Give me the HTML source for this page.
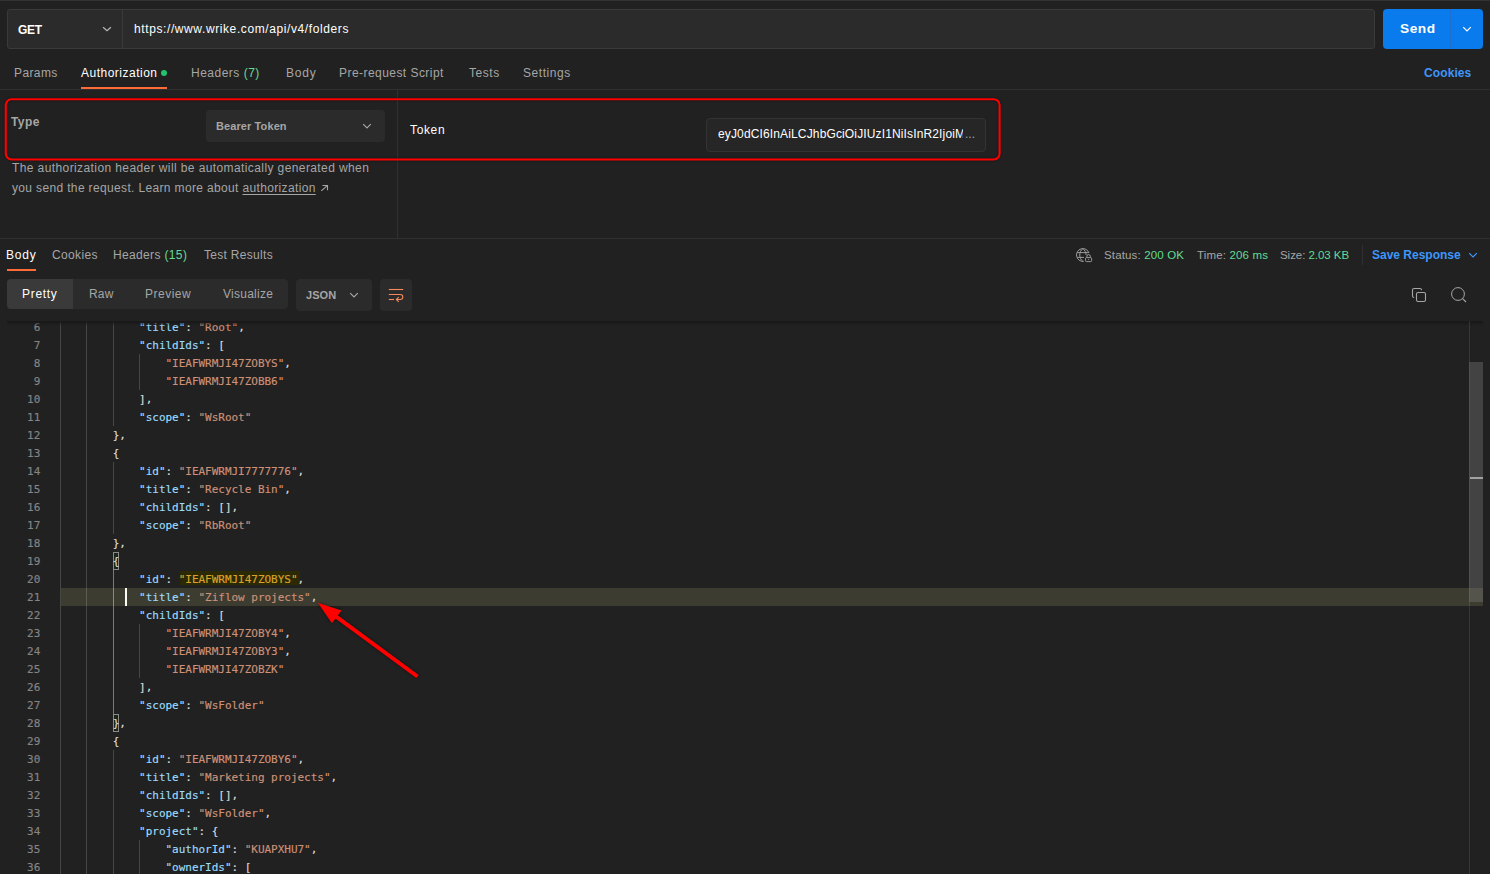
<!DOCTYPE html>
<html lang="en">
<head>
<meta charset="utf-8">
<title>Postman - Wrike folders</title>
<style>
*{box-sizing:border-box;margin:0;padding:0}
html,body{width:1490px;height:874px;overflow:hidden;background:#212121}
body{position:relative;font-family:"Liberation Sans",Arial,sans-serif;font-size:12px;color:#fff;-webkit-font-smoothing:antialiased}
.abs{position:absolute}
.t{position:absolute;white-space:nowrap;line-height:16px}
.gray{color:#a6a6a6}
.grn{color:#62dc95}
.topline{left:0;top:0;width:1490px;height:1px;background:#333}
/* url bar */
.urlbar{left:7px;top:9px;width:1368px;height:40px;background:#2b2b2b;border:1px solid #3a3a3a;border-radius:3px}
.urlsep{left:122px;top:10px;width:1px;height:38px;background:#3a3a3a}
.send{left:1383px;top:9px;width:100px;height:40px;background:#097bed;border-radius:4px}
.sendsep{left:1450px;top:9px;width:1px;height:40px;background:#1f6fd0}
.hline{left:0;width:1490px;height:1px;background:#303030}
.orange{background:#ff6c37}
/* auth */
.redbox{left:5px;top:99px;width:996px;height:61px;border:2px solid #f20a0a;border-radius:7px}
.vsep{left:397px;top:90px;width:1px;height:148px;background:#303030}
.dd{left:206px;top:110px;width:179px;height:32px;background:#2b2b2b;border-radius:4px}
.tok{left:706px;top:118px;width:280px;height:34px;background:#262626;border:1px solid #333;border-radius:4px}
/* response toolbar */
.seg{left:7px;top:279px;width:281px;height:30px;background:#2b2b2b;border-radius:4px}
.segact{left:7px;top:279px;width:66px;height:30px;background:#3a3a3a;border-radius:4px 0 0 4px}
.jsondd{left:296px;top:279px;width:76px;height:32px;background:#2b2b2b;border-radius:4px}
.wrapbtn{left:380px;top:279px;width:32px;height:32px;background:#2b2b2b;border-radius:4px}
/* code */
.code{left:7px;top:321px;width:1476px;height:553px;overflow:hidden;background:#212121}
.shadow{left:7px;top:321px;width:1476px;height:5px;background:linear-gradient(#171717,rgba(33,33,33,0))}
.ln{position:absolute;left:0;width:1469px;height:18px;font-family:"DejaVu Sans Mono","Liberation Mono",monospace;font-size:11px;letter-spacing:-0.022px;line-height:18px;white-space:pre;-webkit-text-stroke:0.15px}
.ln .no{position:absolute;left:0;top:1px;width:40.3px;text-align:right;color:#858585}
.ln .tx{position:absolute;top:1px}
.band{left:61px;top:588px;width:1422px;height:18px;background:#3d3c30}
.k{color:#9cdcfe}.s{color:#ce9178}.p{color:#dcdcdc}
.b{color:#dcdcdc}
.h{color:#dba32c}
.hl{left:180px;top:571px;width:120px;height:14px;background:#2c2a04}
.guide{position:absolute;width:1px;background:rgba(255,255,235,0.17)}
.guide.act{background:rgba(255,255,245,0.40)}
.bbox{left:113px;width:6px;height:18px;border:1px solid #8a8a8a;background:#1b2618}
.cursor{left:125px;top:588px;width:2px;height:18px;background:#fbfbf6}
.sbar{left:1469px;top:362px;width:14px;height:240px;background:rgba(121,121,121,0.4)}
.sline{left:1469px;top:321px;width:1px;height:553px;background:rgba(255,255,255,0.1)}
.smark{left:1470px;top:477px;width:13px;height:2px;background:#a3a3a3}
</style>
</head>
<body>
<div class="abs topline"></div>

<!-- URL bar -->
<div class="abs urlbar"></div>
<div class="abs urlsep"></div>
<svg class="abs" style="left:101px;top:23px" width="12" height="12" viewBox="0 0 12 12"><path d="M2.1 4.2 L6 7.8 L9.9 4.2" fill="none" stroke="#b8b8b8" stroke-width="1.2"/></svg>
<div class="abs send"></div>
<div class="abs sendsep"></div>
<svg class="abs" style="left:1461px;top:23px" width="12" height="12" viewBox="0 0 12 12"><path d="M2.2 4.2 L6 8 L9.8 4.2" fill="none" stroke="#fff" stroke-width="1.2"/></svg>

<!-- request tabs -->
<div class="abs" style="left:161px;top:70px;width:6px;height:6px;border-radius:3px;background:#1fc46c"></div>
<div class="abs orange" style="left:81px;top:87px;width:86px;height:2px"></div>
<div class="abs hline" style="top:89px"></div>

<!-- auth panel -->
<div class="abs vsep"></div>
<div class="abs dd"></div>
<svg class="abs" style="left:361px;top:120px" width="12" height="12" viewBox="0 0 12 12"><path d="M2.2 4.2 L6 8 L9.8 4.2" fill="none" stroke="#a6a6a6" stroke-width="1.2"/></svg>
<div class="abs tok"></div>
<div class="t" style="left:718px;top:126px;width:245px;overflow:hidden;letter-spacing:0.14px">eyJ0dCI6InAiLCJhbGciOiJIUzI1NiIsInR2IjoiMTIz</div>
<div class="t gray" style="left:965px;top:126px">...</div>
<svg class="abs" style="left:0;top:94px;filter:drop-shadow(0 0 1.2px rgba(0,16,16,.7))" width="1010" height="72" viewBox="0 94 1010 72"><rect x="5.75" y="99.3" width="993.85" height="60.2" rx="5.8" ry="5.8" fill="none" stroke="#ff0000" stroke-width="2.1"/></svg>
<svg class="abs" style="left:318px;top:182px" width="12" height="12" viewBox="318 182 12 12"><path d="M321.3 190.8 L327.3 185.7 M322.5 185.5 H327.5 V190.3" fill="none" stroke="#a6a6a6" stroke-width="1.1"/></svg>
<div class="abs hline" style="top:238px"></div>

<!-- response tabs -->
<div class="abs orange" style="left:7px;top:269px;width:29px;height:2px"></div>

<svg class="abs" style="left:1074px;top:246px" width="20" height="18" viewBox="1074 246 20 18"><g fill="none" stroke="#a0a0a0" stroke-width="0.95"><path d="M1088.91 252.81 A6.4 6.4 0 1 0 1083.79 261.34"/><path d="M1077.2 252.6 H1088.9"/><path d="M1077.2 257.4 H1084"/><path d="M1082.9 248.6 C1078.7 251.5 1078.7 258.5 1082.9 261.4"/><path d="M1082.9 248.6 C1085 250.2 1086 252.4 1086.1 255"/><rect x="1085.6" y="257.6" width="6" height="4" rx="0.9"/><path d="M1086.9 257.6 V256.3 A1.7 1.7 0 0 1 1090.3 256.3 V257.6"/><circle cx="1088.6" cy="259.6" r="0.5" fill="#a6a6a6" stroke="none"/></g></svg>
<div class="abs" style="left:1362px;top:245px;width:1px;height:20px;background:#303030"></div>
<svg class="abs" style="left:1467px;top:249px" width="12" height="12" viewBox="0 0 12 12"><path d="M2.2 4.2 L6 8 L9.8 4.2" fill="none" stroke="#3e96fa" stroke-width="1.2"/></svg>

<!-- response toolbar -->
<div class="abs seg"></div>
<div class="abs segact"></div>
<div class="abs jsondd"></div>
<svg class="abs" style="left:348px;top:289px" width="12" height="12" viewBox="0 0 12 12"><path d="M2.2 4.2 L6 8 L9.8 4.2" fill="none" stroke="#a6a6a6" stroke-width="1.2"/></svg>
<div class="abs wrapbtn"></div>
<svg class="abs" style="left:386px;top:286px" width="20" height="18" viewBox="386 286 20 18"><g fill="none" stroke="#f38b5e" stroke-width="1.1"><path d="M388.8 289.5 H403.2"/><path d="M388.8 294.5 H400.3 A2.5 2.5 0 0 1 400.3 299.5 H396.6"/><path d="M388.8 299.5 H394"/><path d="M398.8 297.1 L396.3 299.5 L398.8 301.9"/></g></svg>
<svg class="abs" style="left:1408px;top:284px" width="22" height="22" viewBox="1408 284 22 22"><g fill="none" stroke="#a6a6a6" stroke-width="1.1"><rect x="1416.5" y="292.5" width="9" height="9" rx="1.6"/><path d="M1421.5 290.2 V290 A1.5 1.5 0 0 0 1420 288.5 H1414 A1.5 1.5 0 0 0 1412.5 290 V296 A1.5 1.5 0 0 0 1414 297.5 H1414.2"/></g></svg>
<svg class="abs" style="left:1448px;top:284px" width="22" height="22" viewBox="1448 284 22 22"><g fill="none" stroke="#a6a6a6" stroke-width="1.1"><circle cx="1458" cy="294" r="6.4" stroke-width="1"/><path d="M1462.6 298.6 L1466 302"/></g></svg>

<!-- code -->
<div class="abs code"></div>
<div class="abs band"></div>
<div class="guide" style="left:60px;top:321px;height:553px"></div>
<div class="guide" style="left:86px;top:321px;height:553px"></div>
<div class="guide" style="left:113px;top:321px;height:105px"></div>
<div class="guide" style="left:113px;top:462px;height:72px"></div>
<div class="guide act" style="left:113px;top:570px;height:144px"></div>
<div class="guide" style="left:113px;top:750px;height:124px"></div>
<div class="guide" style="left:139px;top:354px;height:36px"></div>
<div class="guide" style="left:139px;top:624px;height:54px"></div>
<div class="guide" style="left:139px;top:840px;height:34px"></div>
<div class="abs bbox" style="top:552px"></div>
<div class="abs bbox" style="top:714px"></div>
<div class="abs hl"></div>
<div class="ln" style="top:318px"><span class="no">6</span><span class="tx" style="left:139.1px"><span class="k">"title"</span><span class="p">: </span><span class="s">"Root"</span><span class="p">,</span></span></div>
<div class="ln" style="top:336px"><span class="no">7</span><span class="tx" style="left:139.1px"><span class="k">"childIds"</span><span class="p">: [</span></span></div>
<div class="ln" style="top:354px"><span class="no">8</span><span class="tx" style="left:165.5px"><span class="s">"IEAFWRMJI47ZOBYS"</span><span class="p">,</span></span></div>
<div class="ln" style="top:372px"><span class="no">9</span><span class="tx" style="left:165.5px"><span class="s">"IEAFWRMJI47ZOBB6"</span></span></div>
<div class="ln" style="top:390px"><span class="no">10</span><span class="tx" style="left:139.1px"><span class="p">],</span></span></div>
<div class="ln" style="top:408px"><span class="no">11</span><span class="tx" style="left:139.1px"><span class="k">"scope"</span><span class="p">: </span><span class="s">"WsRoot"</span></span></div>
<div class="ln" style="top:426px"><span class="no">12</span><span class="tx" style="left:112.7px"><span class="p">},</span></span></div>
<div class="ln" style="top:444px"><span class="no">13</span><span class="tx" style="left:112.7px"><span class="p">{</span></span></div>
<div class="ln" style="top:462px"><span class="no">14</span><span class="tx" style="left:139.1px"><span class="k">"id"</span><span class="p">: </span><span class="s">"IEAFWRMJI7777776"</span><span class="p">,</span></span></div>
<div class="ln" style="top:480px"><span class="no">15</span><span class="tx" style="left:139.1px"><span class="k">"title"</span><span class="p">: </span><span class="s">"Recycle Bin"</span><span class="p">,</span></span></div>
<div class="ln" style="top:498px"><span class="no">16</span><span class="tx" style="left:139.1px"><span class="k">"childIds"</span><span class="p">: [],</span></span></div>
<div class="ln" style="top:516px"><span class="no">17</span><span class="tx" style="left:139.1px"><span class="k">"scope"</span><span class="p">: </span><span class="s">"RbRoot"</span></span></div>
<div class="ln" style="top:534px"><span class="no">18</span><span class="tx" style="left:112.7px"><span class="p">},</span></span></div>
<div class="ln" style="top:552px"><span class="no">19</span><span class="tx" style="left:112.7px"><span class="b">{</span></span></div>
<div class="ln" style="top:570px"><span class="no">20</span><span class="tx" style="left:139.1px"><span class="k">"id"</span><span class="p">: </span><span class="h">"IEAFWRMJI47ZOBYS"</span><span class="p">,</span></span></div>
<div class="ln cur" style="top:588px"><span class="no">21</span><span class="tx" style="left:139.1px"><span class="k">"title"</span><span class="p">: </span><span class="s">"Ziflow projects"</span><span class="p">,</span></span></div>
<div class="ln" style="top:606px"><span class="no">22</span><span class="tx" style="left:139.1px"><span class="k">"childIds"</span><span class="p">: [</span></span></div>
<div class="ln" style="top:624px"><span class="no">23</span><span class="tx" style="left:165.5px"><span class="s">"IEAFWRMJI47ZOBY4"</span><span class="p">,</span></span></div>
<div class="ln" style="top:642px"><span class="no">24</span><span class="tx" style="left:165.5px"><span class="s">"IEAFWRMJI47ZOBY3"</span><span class="p">,</span></span></div>
<div class="ln" style="top:660px"><span class="no">25</span><span class="tx" style="left:165.5px"><span class="s">"IEAFWRMJI47ZOBZK"</span></span></div>
<div class="ln" style="top:678px"><span class="no">26</span><span class="tx" style="left:139.1px"><span class="p">],</span></span></div>
<div class="ln" style="top:696px"><span class="no">27</span><span class="tx" style="left:139.1px"><span class="k">"scope"</span><span class="p">: </span><span class="s">"WsFolder"</span></span></div>
<div class="ln" style="top:714px"><span class="no">28</span><span class="tx" style="left:112.7px"><span class="b">}</span><span class="p">,</span></span></div>
<div class="ln" style="top:732px"><span class="no">29</span><span class="tx" style="left:112.7px"><span class="p">{</span></span></div>
<div class="ln" style="top:750px"><span class="no">30</span><span class="tx" style="left:139.1px"><span class="k">"id"</span><span class="p">: </span><span class="s">"IEAFWRMJI47ZOBY6"</span><span class="p">,</span></span></div>
<div class="ln" style="top:768px"><span class="no">31</span><span class="tx" style="left:139.1px"><span class="k">"title"</span><span class="p">: </span><span class="s">"Marketing projects"</span><span class="p">,</span></span></div>
<div class="ln" style="top:786px"><span class="no">32</span><span class="tx" style="left:139.1px"><span class="k">"childIds"</span><span class="p">: [],</span></span></div>
<div class="ln" style="top:804px"><span class="no">33</span><span class="tx" style="left:139.1px"><span class="k">"scope"</span><span class="p">: </span><span class="s">"WsFolder"</span><span class="p">,</span></span></div>
<div class="ln" style="top:822px"><span class="no">34</span><span class="tx" style="left:139.1px"><span class="k">"project"</span><span class="p">: {</span></span></div>
<div class="ln" style="top:840px"><span class="no">35</span><span class="tx" style="left:165.5px"><span class="k">"authorId"</span><span class="p">: </span><span class="s">"KUAPXHU7"</span><span class="p">,</span></span></div>
<div class="ln" style="top:858px"><span class="no">36</span><span class="tx" style="left:165.5px"><span class="k">"ownerIds"</span><span class="p">: [</span></span></div>
<div class="abs cursor"></div>
<div class="abs shadow"></div>
<div class="abs sline"></div>
<div class="abs sbar"></div>
<div class="abs smark"></div>

<div class="t" id="t_get" style="left:18.00px;top:22px;letter-spacing:-0.250px;font-weight:bold;">GET</div>
<div class="t" id="t_url" style="left:134.00px;top:21px;letter-spacing:0.600px;">https://www.wrike.com/api/v4/folders</div>
<div class="t" id="t_send" style="left:1400.00px;top:20px;letter-spacing:0.550px;font-size:13.7px;font-weight:bold;line-height:18px;">Send</div>
<div class="t" id="t_params" style="left:14.00px;top:65px;letter-spacing:0.400px;color:#a6a6a6;">Params</div>
<div class="t" id="t_auth" style="left:81.00px;top:65px;letter-spacing:0.500px;">Authorization</div>
<div class="t" id="t_hdr7" style="left:191.00px;top:65px;letter-spacing:0.500px;color:#a6a6a6;">Headers <span class="grn">(7)</span></div>
<div class="t" id="t_body" style="left:286.00px;top:65px;letter-spacing:0.800px;color:#a6a6a6;">Body</div>
<div class="t" id="t_pre" style="left:339.00px;top:65px;letter-spacing:0.450px;color:#a6a6a6;">Pre-request Script</div>
<div class="t" id="t_tests" style="left:469.00px;top:65px;letter-spacing:0.550px;color:#a6a6a6;">Tests</div>
<div class="t" id="t_settings" style="left:523.00px;top:65px;letter-spacing:0.550px;color:#a6a6a6;">Settings</div>
<div class="t" id="t_cookies" style="left:1424.00px;top:65px;letter-spacing:0.100px;color:#3e96fa;font-weight:bold;">Cookies</div>
<div class="t" id="t_type" style="left:11.00px;top:114px;letter-spacing:0.400px;color:#a6a6a6;font-weight:bold;">Type</div>
<div class="t" id="t_bearer" style="left:216.00px;top:118px;letter-spacing:0.100px;color:#a6a6a6;font-weight:bold;font-size:11px;">Bearer Token</div>
<div class="t" id="t_token" style="left:410.00px;top:122px;letter-spacing:0.650px;">Token</div>
<div class="t" id="t_desc1" style="left:12.00px;top:160px;letter-spacing:0.400px;color:#a6a6a6;">The authorization header will be automatically generated when</div>
<div class="t" id="t_desc2" style="left:12.00px;top:180px;letter-spacing:0.350px;color:#a6a6a6;">you send the request. Learn more about <span style="text-decoration:underline;text-underline-offset:2px">authorization</span></div>
<div class="t" id="t_rbody" style="left:6.00px;top:247px;letter-spacing:0.800px;">Body</div>
<div class="t" id="t_rcookies" style="left:52.00px;top:247px;letter-spacing:0.350px;color:#a6a6a6;">Cookies</div>
<div class="t" id="t_rhdr" style="left:113.00px;top:247px;letter-spacing:0.350px;color:#a6a6a6;">Headers <span class="grn">(15)</span></div>
<div class="t" id="t_rtest" style="left:204.00px;top:247px;letter-spacing:0.300px;color:#a6a6a6;">Test Results</div>
<div class="t" id="t_status" style="left:1104.00px;top:247px;letter-spacing:0.150px;color:#a6a6a6;font-size:11.5px;">Status: <span class="grn">200 OK</span></div>
<div class="t" id="t_time" style="left:1197.00px;top:247px;letter-spacing:0.150px;color:#a6a6a6;font-size:11.5px;">Time: <span class="grn">206 ms</span></div>
<div class="t" id="t_size" style="left:1280.00px;top:247px;letter-spacing:-0.050px;color:#a6a6a6;font-size:11.5px;">Size: <span class="grn">2.03 KB</span></div>
<div class="t" id="t_save" style="left:1372.00px;top:247px;letter-spacing:0.000px;color:#3e96fa;font-weight:bold;">Save Response</div>
<div class="t" id="t_pretty" style="left:22.00px;top:286px;letter-spacing:0.700px;">Pretty</div>
<div class="t" id="t_raw" style="left:89.00px;top:286px;letter-spacing:0.150px;color:#a6a6a6;">Raw</div>
<div class="t" id="t_preview" style="left:145.00px;top:286px;letter-spacing:0.500px;color:#a6a6a6;">Preview</div>
<div class="t" id="t_visual" style="left:223.00px;top:286px;letter-spacing:0.250px;color:#a6a6a6;">Visualize</div>
<div class="t" id="t_json" style="left:306.00px;top:287px;letter-spacing:0.050px;color:#a6a6a6;font-weight:bold;font-size:11px;">JSON</div>
<!-- arrow -->
<svg class="abs" style="left:300px;top:590px;filter:drop-shadow(0 0 1.5px rgba(0,0,0,.55))" width="130" height="100" viewBox="300 590 130 100"><path d="M417.5 676.5 L333.5 614.6" stroke="#ff0000" stroke-width="4" fill="none"/><path d="M317.8 602.8 L341.5 610.5 L331.9 623.2 Z" fill="#ff0000"/></svg>
</body>
</html>
